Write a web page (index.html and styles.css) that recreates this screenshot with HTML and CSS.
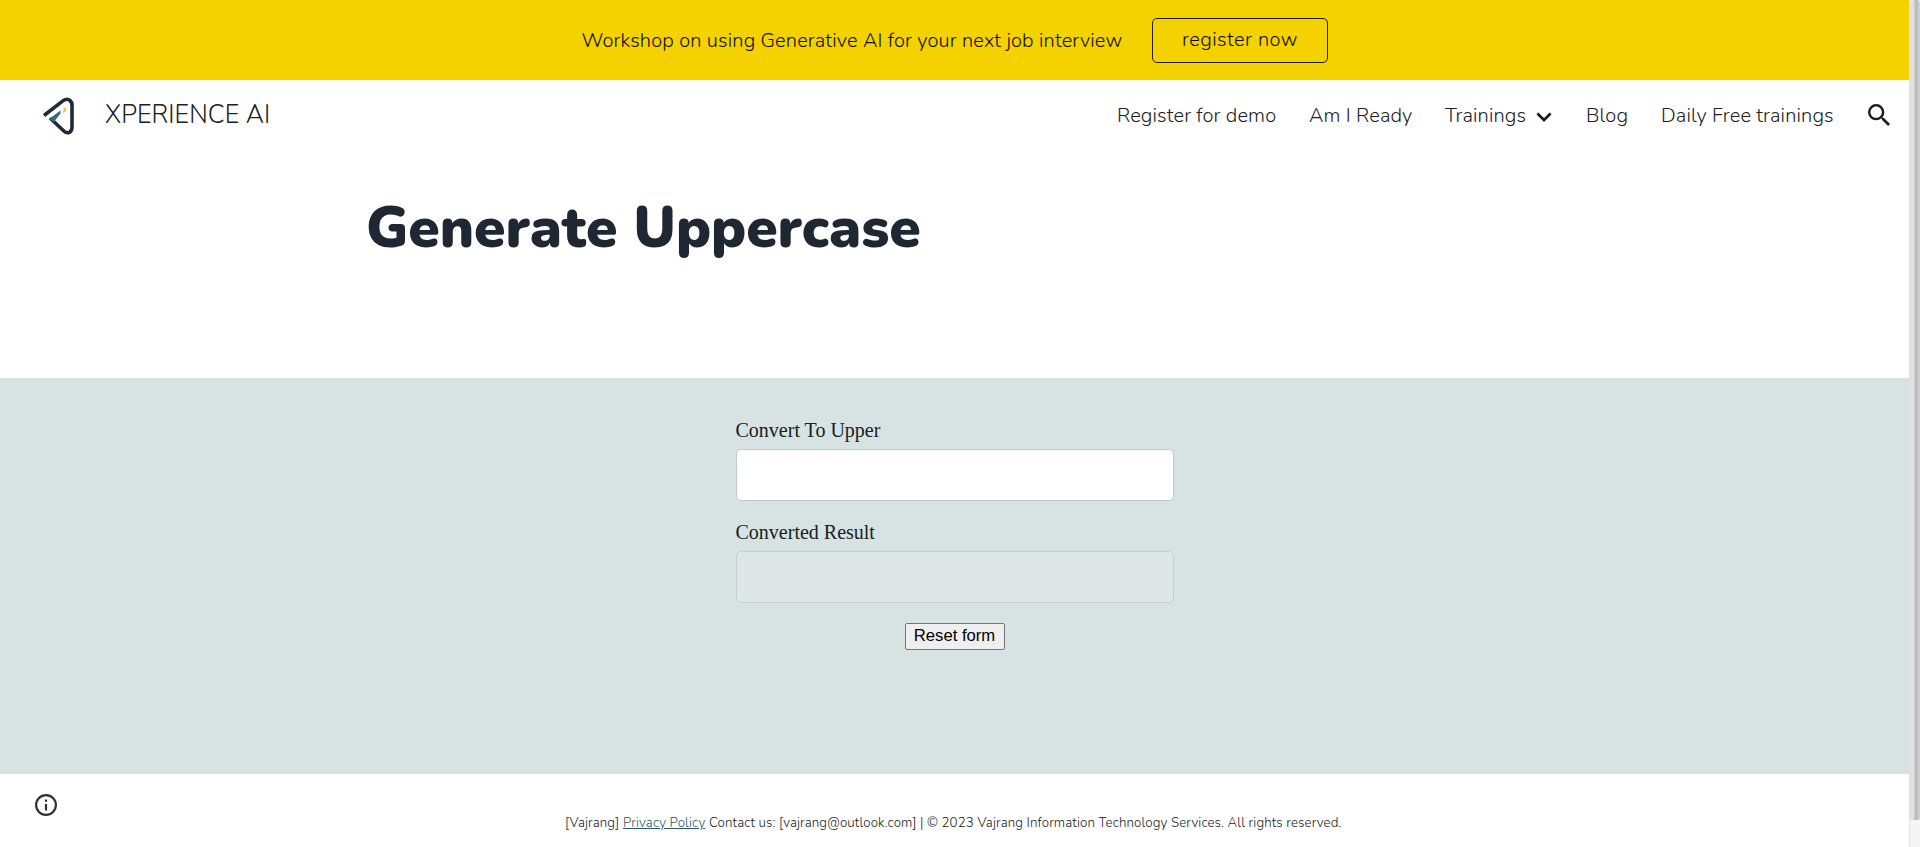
FILE: index.html
```html
<!DOCTYPE html>
<html lang="en">
<head>
<meta charset="utf-8">
<title>Generate Uppercase</title>
<link rel="stylesheet" href="styles.css">
</head>
<body>
<div class="page">
  <div class="banner">
    <span class="banner-text">Workshop on using Generative AI for your next job interview</span>
    <a class="banner-button">register now</a>
  </div>
  <header class="header">
    <svg class="logo" width="32" height="40" viewBox="0 0 32 40" fill="none">
      <path d="M2 20.5 21.5 5.4Q25 3 28 5.5Q30 7.200 30 10V32Q30 36 27.500 37.300Q24.500 38.500 21.800 36L8 23" stroke="#202b38" stroke-width="3.600" stroke-linejoin="round"/>
      <path d="M7 24 18.500 15.500V18.500L12 27Z" fill="#366f76"/>
      <path d="M21.500 13.500 24 12V16L21 18.500Z" fill="#efc651"/>
    </svg>
    <span class="brand">XPERIENCE AI</span>
    <nav class="nav">
      <a class="nav-demo">Register for demo</a>
      <a class="nav-ready">Am I Ready</a>
      <a class="nav-trainings">Trainings</a>
      <svg class="chevron" width="16" height="10" viewBox="0 0 16 10" fill="none"><path d="M1.500 1.500 8 8 14.500 1.500" stroke="#1c1c1c" stroke-width="2.700"/></svg>
      <a class="nav-blog">Blog</a>
      <a class="nav-daily">Daily Free trainings</a>
      <svg class="search" width="22" height="22" viewBox="3 3 17.500 17.500"><path fill="#1c1c1c" d="M15.500 14h-.79l-.28-.27A6.471 6.471 0 0 0 16 9.500 6.500 6.500 0 1 0 9.500 16c1.610 0 3.090-.59 4.230-1.570l.27.28v.79l5 4.990L20.490 19l-4.990-5zm-6 0C7.010 14 5 11.990 5 9.500S7.010 5 9.500 5 14 7.010 14 9.500 11.990 14 9.500 14z"/></svg>
    </nav>
  </header>
  <section class="hero"><h1 class="title">Generate Uppercase</h1></section>
  <section class="converter">
    <form class="form">
      <label class="label" for="source">Convert To Upper</label>
      <input class="field" id="source" type="text">
      <label class="label" for="result">Converted Result</label>
      <input class="field field-result" id="result" type="text" readonly>
      <button class="reset" type="reset">Reset form</button>
    </form>
  </section>
  <footer class="footer">
    <svg class="info" width="22" height="22" viewBox="2 2 20 20"><path fill="#303030" d="M11 7h2v2h-2zm0 4h2v6h-2zm1-9a10 10 0 1 0 0 20 10 10 0 0 0 0-20zm0 18a8 8 0 1 1 0-16 8 8 0 0 1 0 16z"/></svg>
    <p class="legal"><span class="legal-name">[Vajrang]</span><a class="privacy">Privacy Policy</a><span class="legal-rest">Contact us: [vajrang@outlook.com] | © 2023 Vajrang Information Technology Services. All rights reserved.</span></p>
  </footer>
</div>
<div class="scrollbar"><div class="thumb"></div></div>
</body>
</html>
```
FILE: styles.css
```css
* { box-sizing: border-box; }
body { margin: 0; display: flex; height: 847px; overflow: hidden; background: #fff; font-family: Nunito, "Open Sans", sans-serif; font-weight: 300; color: #212121; }
.page { width: 1909px; height: 847px; display: flex; flex-direction: column; }
.banner { height: 80px; background: #f4d200; display: flex; padding-left: 581.5px; white-space: nowrap; color: #120c00; }
.banner-text { width: 570.5px; font-size: 20px; line-height: 81px; letter-spacing: .15px; }
.banner-button { width: 176px; height: 45px; margin-top: 18px; border: 1px solid #211b00; border-radius: 5px; font-size: 20px; line-height: 42px; text-align: center; letter-spacing: .47px; }
.header { height: 70px; display: flex; align-items: center; padding-left: 42px; white-space: nowrap; }
.logo { margin-right: 31px; }
.brand { width: 180px; font-size: 25.2px; line-height: 70px; letter-spacing: .08px; }
.nav { display: flex; align-items: center; margin-left: auto; padding-right: 19px; font-size: 20px; line-height: 71px; letter-spacing: .14px; }
.nav-demo { width: 192px; margin-left: -1px; }
.nav-ready { width: 136px; }
.nav-trainings { width: 91px; }
.chevron { margin-right: 34px; margin-top: 3px; }
.nav-blog { width: 75px; }
.nav-daily { width: 207px; }
.hero { height: 228px; padding: 38px 0 0 366px; }
.title { margin: 0; font-size: 56.67px; line-height: 81px; font-weight: 900; color: #1f2733; white-space: nowrap; }
.converter { height: 396px; background: #d7e3e2; padding-top: 40px; }
.form { width: 438px; margin: 0 auto; display: flex; flex-direction: column; }
.label { font-family: "Liberation Serif", serif; font-weight: 400; font-size: 20px; line-height: 24px; height: 31px; color: #17201f; }
.field { height: 52px; border: 1px solid #c3c9ce; border-radius: 5px; background: #fff; margin: 0 0 19px; padding: 0 12px; font-size: 19px; }
.field-result { background: #dee6e7; border-color: #c5cfd0; margin-bottom: 20px; }
.reset { align-self: center; width: 100px; height: 27px; padding: 0 0 2px; border: 1px solid #747775; border-radius: 2px; background: #efefef; font: 16.67px "Liberation Sans", sans-serif; color: #000; white-space: nowrap; }
.footer { height: 73px; display: flex; align-items: flex-start; padding: 20px 0 0 35px; }
.info { margin-right: 508px; }
.legal { display: flex; margin: 19px 0 0; font-size: 13.33px; letter-spacing: .12px; line-height: 20px; white-space: nowrap; }
.legal-name { width: 58px; }
.privacy { width: 82px; margin-right: 4px; color: #295c64; text-decoration: underline; }
.scrollbar { width: 11px; height: 847px; background: #f5f5f5; border-left: 1px solid #e2e2e2; }
.thumb { height: 820px; background: linear-gradient(90deg, #e0e0e0 0 4px, #bcbcbc 5px 7px, #d0d0d0 9px); border-radius: 3px 3px 2px 2px; }
```
